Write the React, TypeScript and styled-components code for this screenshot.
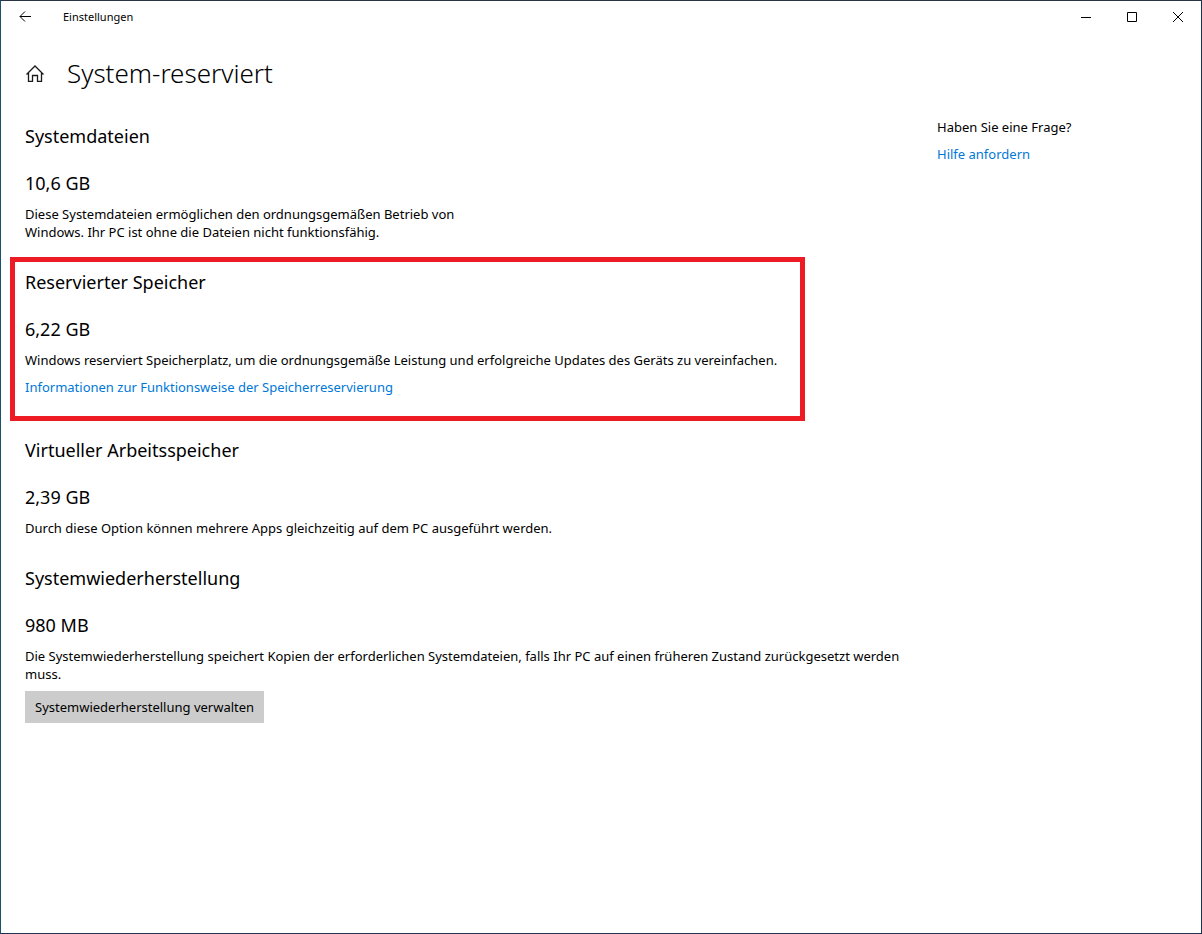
import React from "react";
import styled, { createGlobalStyle } from "styled-components";

const GlobalStyle = createGlobalStyle`
  *, *::before, *::after { box-sizing: border-box; }
  body {
    margin: 0;
    background: #fff;
    color: #000;
    font: 13px/18px "Noto Sans", "Open Sans", sans-serif;
  }
  h1, h2, p { margin: 0; font-weight: 400; }
`;

const Window = styled.div`
  display: flex;
  flex-direction: column;
  min-height: 100vh;
  background: #fff;
  border: 1px solid #1c3450;
  border-top-color: #2a3544;
  border-left-color: #16536c;
`;

const TitleBar = styled.header`
  display: flex;
  align-items: center;
  height: 32px;
`;

const BarButton = styled.button<{ $wide?: boolean }>`
  display: flex;
  align-items: center;
  justify-content: center;
  width: ${({ $wide }) => ($wide ? "48px" : "46px")};
  height: 32px;
  padding: 0;
  border: 0;
  background: transparent;
  color: #000;
`;

const AppName = styled.span`
  flex: 1;
  padding-left: 14px;
  font-size: 11px;
`;

const PageHeader = styled.div`
  display: flex;
  align-items: center;
  gap: 22px;
  padding: 20px 24px 0;
`;

const HomeButton = styled.button`
  display: flex;
  padding: 0;
  border: 0;
  background: transparent;
  color: #1a1a1a;
`;

const PageTitle = styled.h1`
  font-size: 26px;
  line-height: 40px;
  && { font-weight: 300; }
`;

const Columns = styled.div`
  display: grid;
  grid-template-columns: minmax(0, 903px) minmax(140px, 1fr);
  gap: 24px;
  padding: 18px 24px 24px 9px;
`;

const Main = styled.main`
  display: flex;
  flex-direction: column;
`;

const Section = styled.section`
  padding: 11px 9px 12px 15px;
  & + & { padding-top: 15px; }
`;

const MarkedSection = styled(Section)`
  align-self: flex-start;
  margin-top: 4px;
  && { padding: 6px 23px 20px 10px; }
  border: 5px solid #ed1c24;
`;

const Heading = styled.h2`
  font-size: 18px;
  line-height: 28px;
`;

const Size = styled.p`
  margin: 19px 0 8px;
  font-size: 18px;
  line-height: 28px;
`;

const Text = styled.p<{ $narrow?: boolean }>`
  max-width: ${({ $narrow }) => ($narrow ? "450px" : "none")};
`;

const Link = styled.a`
  display: inline-block;
  margin-top: 9px;
  color: #0078d7;
  text-decoration: none;
`;

const ManageButton = styled.button`
  height: 32px;
  margin-top: 8px;
  padding: 0 10px;
  border: 0;
  background: #ccc;
  color: #000;
  font: inherit;
`;

const Aside = styled.aside`
  padding-top: 7px;
`;

export default function App() {
  return (
    <>
      <GlobalStyle />
      <Window>
        <TitleBar>
          <BarButton $wide aria-label="Zurück">
            <svg width="12" height="12" viewBox="0 0 12 12" fill="none" stroke="currentColor">
              <path d="M12 5.5H1M6 .5L1 5.5L6 10.5" />
            </svg>
          </BarButton>
          <AppName>Einstellungen</AppName>
          <BarButton aria-label="Minimieren">
            <svg width="10" height="10" viewBox="0 0 10 10" stroke="currentColor">
              <path d="M0 5.5H10" />
            </svg>
          </BarButton>
          <BarButton aria-label="Maximieren">
            <svg width="10" height="10" viewBox="0 0 10 10" fill="none" stroke="currentColor">
              <path d="M.5 .5H9.5V9.5H.5Z" />
            </svg>
          </BarButton>
          <BarButton aria-label="Schließen">
            <svg width="10" height="10" viewBox="0 0 10 10" stroke="currentColor">
              <path d="M0 0L10 10M10 0L0 10" />
            </svg>
          </BarButton>
        </TitleBar>
        <PageHeader>
          <HomeButton aria-label="Startseite">
            <svg width="20" height="18" viewBox="0 0 20 18" fill="none" stroke="currentColor" strokeWidth="1.3">
              <path d="M1.5 10.5L10 2L18.5 10.5M3.5 9V17.3H7.5V11.5H12.5V17.3H16.5V9" />
            </svg>
          </HomeButton>
          <PageTitle>System-reserviert</PageTitle>
        </PageHeader>
        <Columns>
          <Main>
            <Section>
              <Heading>Systemdateien</Heading>
              <Size>10,6 GB</Size>
              <Text $narrow>
                Diese Systemdateien ermöglichen den ordnungsgemäßen Betrieb von Windows. Ihr PC ist ohne die Dateien
                nicht funktionsfähig.
              </Text>
            </Section>
            <MarkedSection>
              <Heading>Reservierter Speicher</Heading>
              <Size>6,22 GB</Size>
              <Text>
                Windows reserviert Speicherplatz, um die ordnungsgemäße Leistung und erfolgreiche Updates des Geräts zu
                vereinfachen.
              </Text>
              <Link href="#speicherreservierung">Informationen zur Funktionsweise der Speicherreservierung</Link>
            </MarkedSection>
            <Section>
              <Heading>Virtueller Arbeitsspeicher</Heading>
              <Size>2,39 GB</Size>
              <Text>Durch diese Option können mehrere Apps gleichzeitig auf dem PC ausgeführt werden.</Text>
            </Section>
            <Section>
              <Heading>Systemwiederherstellung</Heading>
              <Size>980 MB</Size>
              <Text>
                Die Systemwiederherstellung speichert Kopien der erforderlichen Systemdateien, falls Ihr PC auf einen
                früheren Zustand zurückgesetzt werden muss.
              </Text>
              <ManageButton>Systemwiederherstellung verwalten</ManageButton>
            </Section>
          </Main>
          <Aside>
            <Text>Haben Sie eine Frage?</Text>
            <Link href="#hilfe">Hilfe anfordern</Link>
          </Aside>
        </Columns>
      </Window>
    </>
  );
}
